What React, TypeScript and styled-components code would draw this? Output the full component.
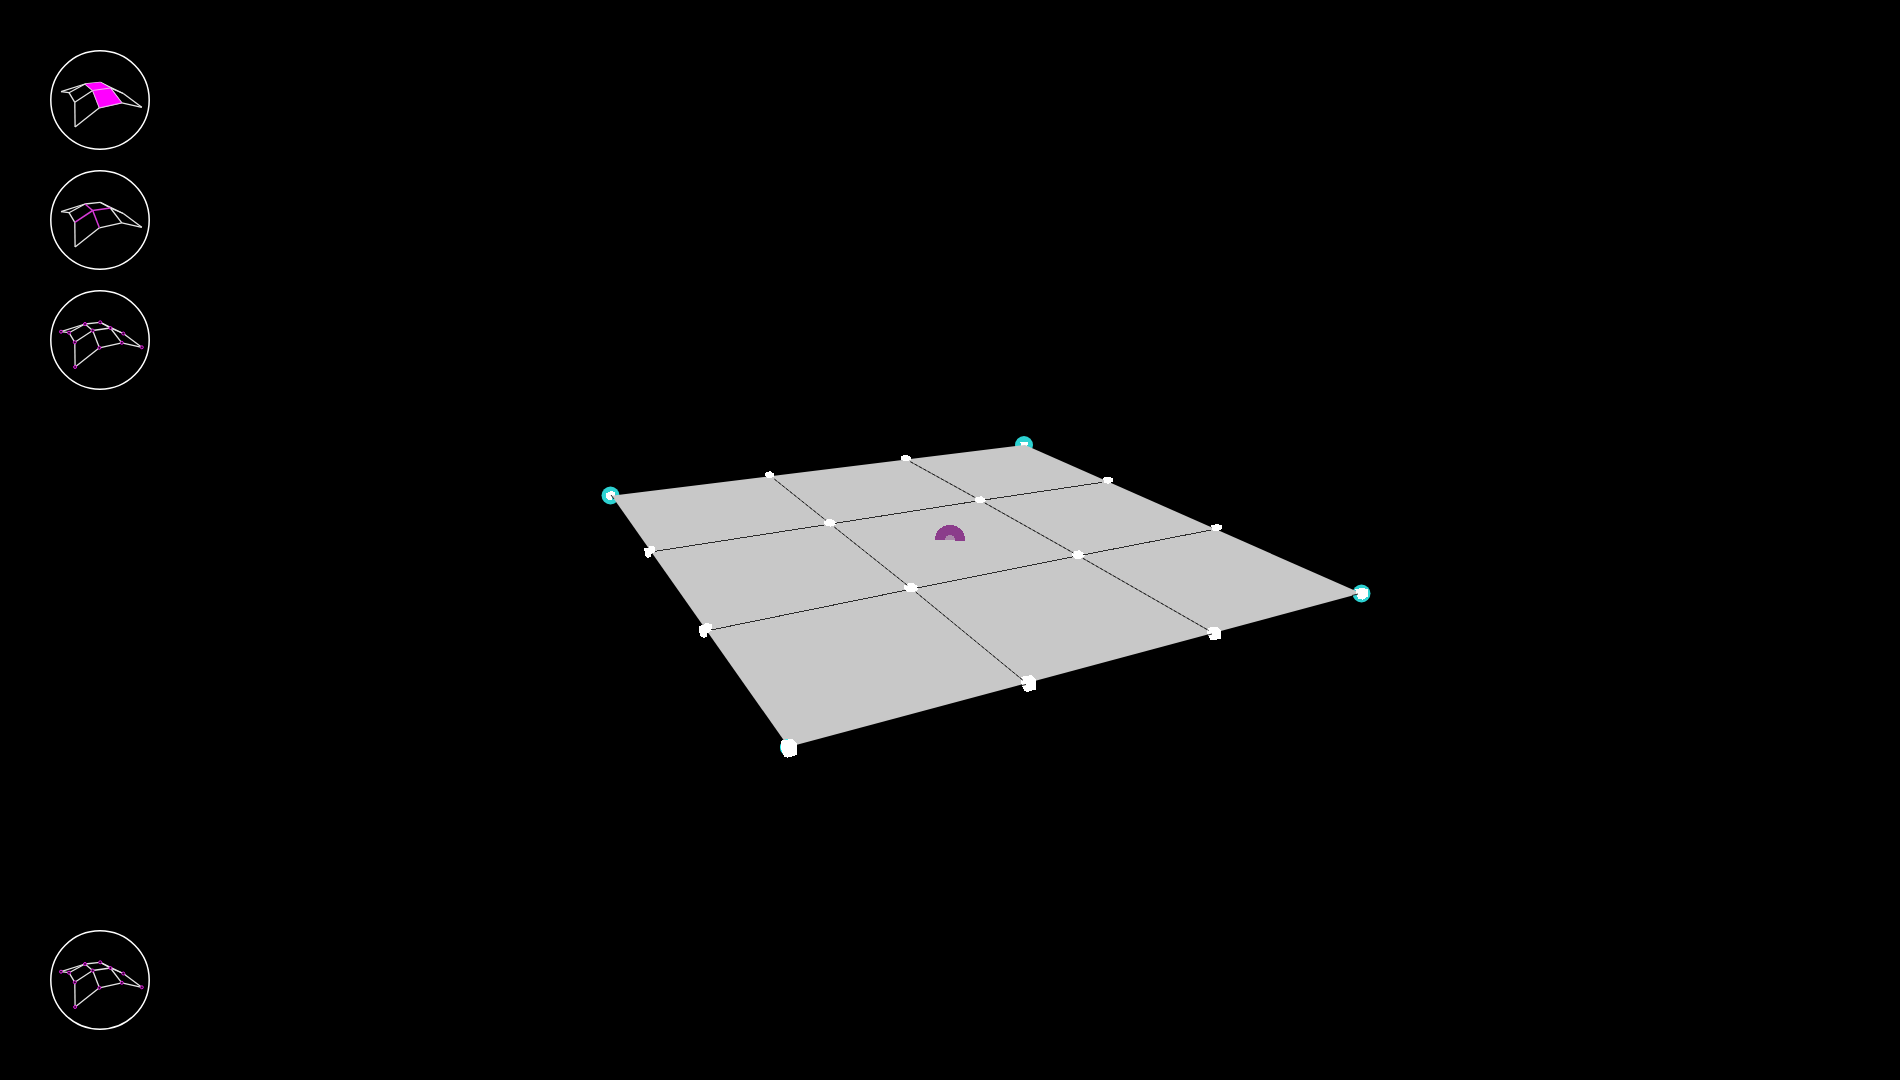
import React from "react";
import styled, { createGlobalStyle } from "styled-components";

const GlobalStyle = createGlobalStyle`
  body {
    margin: 0;
    background: #000;
    font-family: "Liberation Sans", Arial, sans-serif;
  }
`;

const Editor = styled.main`
  display: grid;
  grid-template: minmax(100vh, auto) / 100%;
  background: #000;
  overflow: hidden;
`;

const Viewport = styled.svg`
  grid-area: 1 / 1;
  display: block;
  width: 100%;
  height: 100vh;
`;

const Sidebar = styled.nav`
  grid-area: 1 / 1;
  justify-self: start;
  z-index: 1;
  display: flex;
  flex-direction: column;
  justify-content: space-between;
  gap: 20px;
  padding: 50px;
`;

const ToolGroup = styled.div`
  display: flex;
  flex-direction: column;
  gap: 20px;
`;

const ToolButton = styled.button`
  display: block;
  width: 100px;
  height: 100px;
  padding: 0;
  border: 0;
  border-radius: 50%;
  background: transparent;
  cursor: pointer;
`;

const ToolIcon = styled.svg`
  display: block;
  width: 100%;
  height: 100%;
  fill: none;
`;

type Point = [number, number];
type Mode = "face" | "edge" | "vertex";

const mesh: Record<string, Point> = {
  a: [11, 41.7],
  b: [19, 42.7],
  c: [35, 34],
  d: [50.2, 32.3],
  e: [42.7, 40.5],
  f: [60.4, 38],
  g: [73.3, 43.5],
  h: [24.8, 52.3],
  i: [49.4, 57.8],
  j: [71.8, 52.8],
  k: [91.8, 57.3],
  l: [25.1, 77],
};

const edges = ["ac", "ab", "bc", "bh", "cd", "df", "dg", "fg", "gk", "hl", "li", "ij", "fj", "jk"];
const innerEdges = ["ce", "he", "ef", "ei"];

const points = (keys: string) => keys.split("").map((k) => mesh[k].join(",")).join(" ");

function MeshIcon({ mode }: { mode: Mode }) {
  return (
    <ToolIcon viewBox="0 0 100 100" aria-hidden="true">
      <circle cx="50" cy="50" r="49.2" stroke="#fff" strokeWidth="1.5" />
      <g stroke="#e6e6e6" strokeWidth="1.3">
        {edges.map((e) => (
          <polyline key={e} points={points(e)} />
        ))}
      </g>
      <g
        stroke={mode === "edge" ? "#d63ad6" : "#e6e6e6"}
        strokeWidth={mode === "edge" ? 1.5 : 1.3}
      >
        {innerEdges.map((e) => (
          <polyline key={e} points={points(e)} />
        ))}
      </g>
      {mode === "face" && (
        <>
          <polygon points={points("cdfjie")} fill="#f0f" />
          <polyline points={points("ef")} stroke="#f0b0f0" strokeWidth="1.2" />
          <polyline points={points("cei")} stroke="#f0b0f0" strokeWidth="0.6" />
          <polyline points={points("ijf")} stroke="#f0b0f0" strokeWidth="0.8" />
        </>
      )}
      {mode === "vertex" &&
        Object.entries(mesh).map(([k, [x, y]]) => (
          <circle key={k} cx={x} cy={y} r="1.5" fill="#201020" stroke="#e41ce4" strokeWidth="1" />
        ))}
    </ToolIcon>
  );
}

/* Control points of the surface, row by row from the far edge to the near edge. */
const grid: Point[][] = [
  [[611.7, 495.7], [770.5, 476], [906, 459.3], [1025, 445]],
  [[650.5, 552], [830.5, 524], [980.5, 500.5], [1108, 481.5]],
  [[706, 631], [912, 589], [1078.5, 555.8], [1216.5, 529]],
  [[788.5, 747], [1027.5, 684], [1214, 633.5], [1361, 593.3]],
];

type Silhouette = "cube" | "side" | "flat" | "cup";

/* Outlines of a projected handle, relative to its bounding box. */
const silhouettes: Record<Silhouette, Point[]> = {
  cube: [[-0.47, -0.4], [0.2, -0.5], [0.47, -0.25], [0.5, 0.35], [-0.1, 0.5], [-0.3, 0.42], [-0.5, -0.05]],
  side: [[-0.5, -0.3], [-0.1, -0.35], [0, -0.5], [0.5, -0.4], [0.5, 0], [0.15, 0.2], [0.15, 0.45], [-0.2, 0.5], [-0.45, 0.3]],
  flat: [[-0.5, -0.2], [-0.25, -0.4], [0.1, -0.5], [0.5, -0.1], [0.48, 0.25], [0.1, 0.5], [-0.25, 0.42], [-0.48, 0.15]],
  cup: [[-0.5, -0.35], [0.1, -0.5], [0.5, -0.35], [0.5, 0.2], [0.1, 0.5], [-0.3, 0.4], [-0.4, 0]],
};

type Handle = { shape: Silhouette; x: number; y: number; w: number; h: number };

const handles: Handle[] = [
  { shape: "side", x: 610.5, y: 495.5, w: 9, h: 9 },
  { shape: "flat", x: 769.5, y: 474.7, w: 10, h: 7 },
  { shape: "flat", x: 905.7, y: 458, w: 10, h: 7 },
  { shape: "cup", x: 1024, y: 444, w: 8, h: 5 },
  { shape: "side", x: 649.8, y: 551.7, w: 11, h: 12 },
  { shape: "flat", x: 829.8, y: 522.7, w: 12, h: 8 },
  { shape: "flat", x: 980.3, y: 499.7, w: 11, h: 7 },
  { shape: "cup", x: 1107.5, y: 480.3, w: 10, h: 7 },
  { shape: "side", x: 705.5, y: 630.3, w: 13, h: 15 },
  { shape: "flat", x: 911.2, y: 587.5, w: 14, h: 10 },
  { shape: "flat", x: 1078.2, y: 554.7, w: 13, h: 9 },
  { shape: "cup", x: 1216.2, y: 527.7, w: 11, h: 7 },
  { shape: "cube", x: 789, y: 748.3, w: 17, h: 19 },
  { shape: "cube", x: 1028.5, y: 683.5, w: 15, h: 17 },
  { shape: "cube", x: 1214.2, y: 633.5, w: 14, h: 14 },
  { shape: "cup", x: 1361.7, y: 593.7, w: 13, h: 12 },
];

const outlineOf = ({ shape, x, y, w, h }: Handle) =>
  silhouettes[shape].map(([dx, dy]) => `${x + dx * w},${y + dy * h}`).join(" ");

/* A mesh line that stays clear of the handles at both of its ends. */
function Segment({ from, to, dashed }: { from: Point; to: Point; dashed?: boolean }) {
  const dx = to[0] - from[0];
  const dy = to[1] - from[1];
  const len = Math.hypot(dx, dy);
  const ends = {
    x1: from[0] + (dx / len) * 5,
    y1: from[1] + (dy / len) * 5,
    x2: to[0] - (dx / len) * 6,
    y2: to[1] - (dy / len) * 6,
  };
  return dashed ? (
    <>
      <line {...ends} stroke="#6a6a6a" />
      <line {...ends} stroke="#1c1c1c" strokeDasharray="3 2" />
    </>
  ) : (
    <line {...ends} stroke="#2c2c2c" shapeRendering="crispEdges" />
  );
}

function Surface() {
  const outline = [grid[0][0], grid[0][3], grid[3][3], grid[3][0]];
  return (
    <Viewport viewBox="0 0 1900 1080" role="img" aria-label="Surface control mesh">
      <g fill="#2dd2d2">
        <circle cx="610.5" cy="495.5" r="9" />
        <circle cx="1024" cy="445" r="9" />
        <circle cx="1361.5" cy="593.5" r="9" />
      </g>
      <circle cx="788.5" cy="747.5" r="8.5" fill="#3ff" />
      <g fill="#fff" shapeRendering="crispEdges">
        <polygon points={outlineOf(handles[0])} />
        <polygon points={outlineOf(handles[3])} />
      </g>
      <polygon points={outline.map((p) => p.join(",")).join(" ")} fill="#c8c8c8" />
      <path d="M780 747.5a8.5 8.5 0 0 1 17 0z" fill="#3ff" />
      <g fill="#fff" shapeRendering="crispEdges">
        {handles
          .filter((_, n) => n !== 0 && n !== 3)
          .map((handle) => (
            <polygon key={`${handle.x}-${handle.y}`} points={outlineOf(handle)} />
          ))}
      </g>
      <g stroke="#222">
        <line x1="611" y1="495" x2="614" y2="499" />
        <line x1="1022" y1="685.5" x2="1026" y2="684.5" />
        <line x1="1208" y1="635" x2="1212" y2="634" />
        <line x1="1352" y1="595.5" x2="1358" y2="594" />
      </g>
      <path
        d="M935 539.5a15 14.5 0 0 1 30 0v1h-10l-10-1z"
        fill="#8b3c8b"
        shapeRendering="crispEdges"
      />
      <path d="M945 539.5a5 4.5 0 0 1 10 0z" fill="#ab8aab" shapeRendering="crispEdges" />
      <g fill="none" strokeWidth="1">
        {[1, 2].map((n) =>
          [0, 1, 2].map((s) => (
            <React.Fragment key={`${n}-${s}`}>
              <Segment from={grid[n][s]} to={grid[n][s + 1]} />
              <Segment from={grid[s][n]} to={grid[s + 1][n]} dashed />
            </React.Fragment>
          )),
        )}
      </g>
    </Viewport>
  );
}

export default function App() {
  return (
    <>
      <GlobalStyle />
      <Editor>
        <Surface />
        <Sidebar aria-label="Mesh tools">
          <ToolGroup>
            <ToolButton type="button" aria-label="Select faces">
              <MeshIcon mode="face" />
            </ToolButton>
            <ToolButton type="button" aria-label="Select edges">
              <MeshIcon mode="edge" />
            </ToolButton>
            <ToolButton type="button" aria-label="Select vertices">
              <MeshIcon mode="vertex" />
            </ToolButton>
          </ToolGroup>
          <ToolButton type="button" aria-label="Edit vertices">
            <MeshIcon mode="vertex" />
          </ToolButton>
        </Sidebar>
      </Editor>
    </>
  );
}
